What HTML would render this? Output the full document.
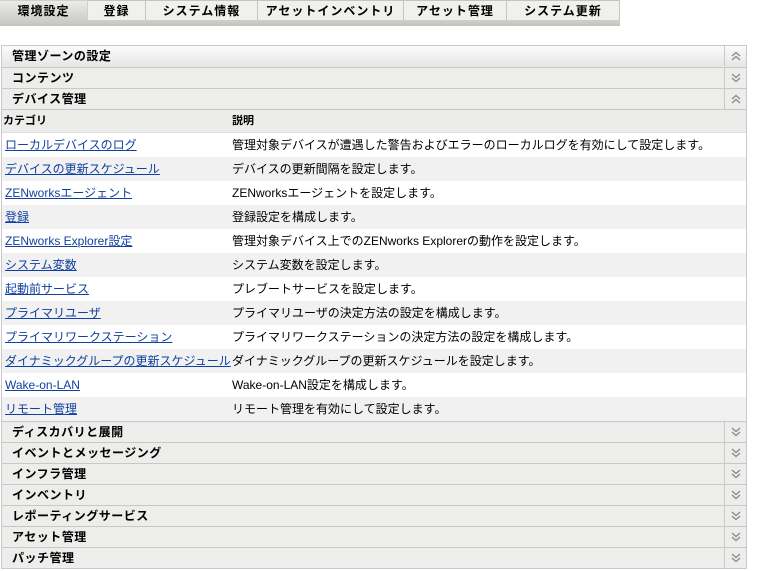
<!DOCTYPE html>
<html><head><meta charset="utf-8"><style>
*{margin:0;padding:0;box-sizing:border-box}
body{width:759px;height:571px;background:#fff;font-family:"Liberation Sans","Noto Sans CJK JP",sans-serif;font-size:12px;color:#000;position:relative;overflow:hidden}
.tabs{position:absolute;left:0;top:0;height:20px;display:flex}
.tab{height:20px;border:1px solid #c4c4c0;border-bottom:none;border-left:none;background:#f0f0ed;font-weight:bold;font-size:12px;text-align:center;line-height:20px;letter-spacing:1px}
.tab.act{background:linear-gradient(#ebebe8,#cfd0cc);border-color:#cfd0cc}
.bar{position:absolute;left:0;top:20px;width:620px;height:6px;background:linear-gradient(#cfd0cc,#c2c3bf)}
.panel{position:absolute;left:1px;top:45px;width:746px;border:1px solid #c8c8c8;border-bottom:none}
.h{height:21px;border-bottom:1px solid #c8c8c8;background:#ededeb;position:relative;font-weight:bold;line-height:21px;padding-left:10px;font-size:12px;letter-spacing:0.5px}
.h.first{background:linear-gradient(#fbfbfb,#e6e6e4);height:22px}
.h .ic{position:absolute;right:0;top:0;width:22px;height:20px;border-left:1px solid #c8c8c8}
.h .ic svg{position:absolute;left:6px;top:5px}
.ch{height:23px;background:#ececea;border-bottom:1px solid #e0e0e0;position:relative;font-weight:bold;font-size:11px;line-height:23px}
.r{height:24px;position:relative;line-height:24px}
.r a{position:absolute;left:3px;color:#1040a0;text-decoration:underline}
.r span{position:absolute;left:230px}
</style></head><body>
<svg width="0" height="0" style="position:absolute"><defs>
<symbol id="dn" viewBox="0 0 10 10"><path d="M1 1L5 4.5L9 1M1 5L5 8.5L9 5" fill="none" stroke="#8a8a8a" stroke-width="1.3"/></symbol>
<symbol id="up" viewBox="0 0 10 10"><path d="M1 5L5 1.5L9 5M1 9L5 5.5L9 9" fill="none" stroke="#8a8a8a" stroke-width="1.3"/></symbol>
</defs></svg>
<div class="tabs">
<div class="tab act" style="width:88px">環境設定</div>
<div class="tab" style="width:58px">登録</div>
<div class="tab" style="width:112px">システム情報</div>
<div class="tab" style="width:146px">アセットインベントリ</div>
<div class="tab" style="width:103px">アセット管理</div>
<div class="tab" style="width:113px">システム更新</div>
</div>
<div class="bar"></div>
<div class="panel">
<div class="h first">管理ゾーンの設定<div class="ic"><svg width="10" height="10"><use href="#up"/></svg></div></div>
<div class="h">コンテンツ<div class="ic"><svg width="10" height="10"><use href="#dn"/></svg></div></div>
<div class="h">デバイス管理<div class="ic"><svg width="10" height="10"><use href="#up"/></svg></div></div>
<div class="ch"><span style="position:absolute;left:1px">カテゴリ</span><span style="position:absolute;left:230px">説明</span></div>
<div>
<div class="r" style="background:#fff"><a>ローカルデバイスのログ</a><span>管理対象デバイスが遭遇した警告およびエラーのローカルログを有効にして設定します。</span></div>
<div class="r" style="background:#f1f1f1"><a>デバイスの更新スケジュール</a><span>デバイスの更新間隔を設定します。</span></div>
<div class="r" style="background:#fff"><a>ZENworksエージェント</a><span>ZENworksエージェントを設定します。</span></div>
<div class="r" style="background:#f1f1f1"><a>登録</a><span>登録設定を構成します。</span></div>
<div class="r" style="background:#fff"><a>ZENworks Explorer設定</a><span>管理対象デバイス上でのZENworks Explorerの動作を設定します。</span></div>
<div class="r" style="background:#f1f1f1"><a>システム変数</a><span>システム変数を設定します。</span></div>
<div class="r" style="background:#fff"><a>起動前サービス</a><span>プレブートサービスを設定します。</span></div>
<div class="r" style="background:#f1f1f1"><a>プライマリユーザ</a><span>プライマリユーザの決定方法の設定を構成します。</span></div>
<div class="r" style="background:#fff"><a>プライマリワークステーション</a><span>プライマリワークステーションの決定方法の設定を構成します。</span></div>
<div class="r" style="background:#f1f1f1"><a>ダイナミックグループの更新スケジュール</a><span>ダイナミックグループの更新スケジュールを設定します。</span></div>
<div class="r" style="background:#fff"><a>Wake-on-LAN</a><span>Wake-on-LAN設定を構成します。</span></div>
<div class="r" style="background:#f1f1f1;border-bottom:1px solid #c8c8c8;height:25px"><a>リモート管理</a><span>リモート管理を有効にして設定します。</span></div>
</div>
<div class="h">ディスカバリと展開<div class="ic"><svg width="10" height="10"><use href="#dn"/></svg></div></div>
<div class="h">イベントとメッセージング<div class="ic"><svg width="10" height="10"><use href="#dn"/></svg></div></div>
<div class="h">インフラ管理<div class="ic"><svg width="10" height="10"><use href="#dn"/></svg></div></div>
<div class="h">インベントリ<div class="ic"><svg width="10" height="10"><use href="#dn"/></svg></div></div>
<div class="h">レポーティングサービス<div class="ic"><svg width="10" height="10"><use href="#dn"/></svg></div></div>
<div class="h">アセット管理<div class="ic"><svg width="10" height="10"><use href="#dn"/></svg></div></div>
<div class="h">パッチ管理<div class="ic"><svg width="10" height="10"><use href="#dn"/></svg></div></div>
</div>
</body></html>
